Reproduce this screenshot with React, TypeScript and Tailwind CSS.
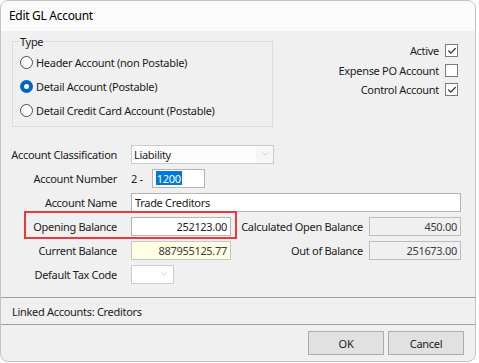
import { Check, ChevronDown } from "lucide-react";

const field = "h-[19px] border px-[3px] flex items-center";

function Radio({ on, label }: { on?: boolean; label: string }) {
  return (
    <div className="flex items-center h-[24px]">
      <span
        className={
          on
            ? "w-[13px] h-[13px] rounded-full bg-[#0067c0] flex items-center justify-center"
            : "w-[13px] h-[13px] rounded-full border border-[#4d4d4d] bg-white"
        }
      >
        {on && <span className="w-[5px] h-[5px] rounded-full bg-white" />}
      </span>
      <span className="ml-[3px]">{label}</span>
    </div>
  );
}

function CheckRow({ label, checked }: { label: string; checked?: boolean }) {
  return (
    <div className="flex items-center justify-end h-[19.5px]">
      <span>{label}</span>
      <span className="ml-[6px] w-[13px] h-[13px] border border-[#7a7a7a] bg-white flex items-center justify-center">
        {checked && <Check className="w-[10px] h-[10px] text-[#333]" strokeWidth={3} />}
      </span>
    </div>
  );
}

function Label({ children }: { children: React.ReactNode }) {
  return <div className="w-[116px] text-right shrink-0">{children}</div>;
}

export default function App() {
  return (
    <div className="w-[479px] h-[363px] bg-white text-[11px] tracking-[-0.3px] text-[#1b1b1b] leading-none whitespace-nowrap font-['Noto_Sans',sans-serif]">
      <div className="w-[476px] h-[362px] rounded-[8px] border border-[#c4c4c4] bg-[#f0f0f0] overflow-hidden flex flex-col">
        {/* Title bar */}
        <div className="h-[30px] bg-[#fbfbfb] flex items-center pl-[8px] text-[12px] text-black shrink-0">
          Edit GL Account
        </div>

        {/* Type group + flags */}
        <div className="flex pl-[11px] pr-[17px]">
          <fieldset className="mt-[5px] w-[261px] h-[91px] border border-[#dcdcdc] pl-[7px] pt-0">
            <legend className="px-[1px] ml-[-1px] mt-[2px]">Type</legend>
            <div className="flex flex-col mt-[3px]">
              <Radio label="Header Account (non Postable)" />
              <Radio on label="Detail Account (Postable)" />
              <Radio label="Detail Credit Card Account (Postable)" />
            </div>
          </fieldset>
          <div className="ml-auto mt-[10px] flex flex-col">
            <CheckRow label="Active" checked />
            <CheckRow label="Expense PO Account" />
            <CheckRow label="Control Account" checked />
          </div>
        </div>

        {/* Form rows */}
        <div className="mt-[15px] flex flex-col">
          <div className="flex items-center h-[24px]">
            <Label>Account Classification</Label>
            <div className="ml-[14px] w-[143px] h-[19px] border border-[#cccccc] bg-[#fdfdfd] flex items-center">
              <span className="pl-[2px] flex-1">Liability</span>
              <span className="w-[17px] h-full bg-[#f6f6f6] flex items-center justify-center">
                <ChevronDown className="w-[10px] h-[10px] text-[#b5b5b5]" strokeWidth={1.5} />
              </span>
            </div>
          </div>

          <div className="flex items-center h-[24px]">
            <Label>Account Number</Label>
            <span className="ml-[14px]">2 -</span>
            <div className={`${field} ml-[9px] w-[53px] bg-white border-[#b4b4b4]`}>
              <span className="bg-[#0078d7] text-white px-[1px] h-[14px] flex items-center">1200</span>
            </div>
          </div>

          <div className="flex items-center h-[24px]">
            <Label>Account Name</Label>
            <div className={`${field} ml-[14px] w-[330px] bg-white border-[#b4b4b4]`}>Trade Creditors</div>
          </div>

          <div className="relative flex items-center h-[24px]">
            <div className="absolute left-[23px] top-[-3px] w-[213px] h-[28px] border-2 border-[#e8393b]" />
            <Label>Opening Balance</Label>
            <div className={`${field} ml-[14px] w-[100px] justify-end bg-white border-[#b4b4b4]`}>252123.00</div>
            <div className="flex-1 text-right pr-[6px]">Calculated Open Balance</div>
            <div className={`${field} mr-[14px] w-[92px] justify-end bg-[#f0f0f0] border-[#bdbdbd] text-[#3c3c3c]`}>450.00</div>
          </div>

          <div className="flex items-center h-[24px]">
            <Label>Current Balance</Label>
            <div className={`${field} ml-[14px] w-[100px] justify-end bg-[#fffee4] border-[#c8c8c8] text-[#3c3c3c]`}>887955125.77</div>
            <div className="flex-1 text-right pr-[6px]">Out of Balance</div>
            <div className={`${field} mr-[14px] w-[92px] justify-end bg-[#f0f0f0] border-[#bdbdbd] text-[#3c3c3c]`}>251673.00</div>
          </div>

          <div className="flex items-center h-[24px]">
            <Label>Default Tax Code</Label>
            <div className="ml-[14px] w-[43px] h-[19px] border border-[#cccccc] bg-white flex items-center justify-end pr-[4px]">
              <ChevronDown className="w-[10px] h-[10px] text-[#b5b5b5]" strokeWidth={1.5} />
            </div>
          </div>
        </div>

        {/* Linked accounts */}
        <div className="mt-[11px] h-[28px] border-t border-b border-[#a0a0a0] flex items-center pl-[11px]">
          Linked Accounts: Creditors
        </div>

        {/* Buttons */}
        <div className="flex justify-end gap-[4px] pt-[6px] pr-[11px]">
          <button className="w-[76px] h-[24px] border border-[#adadad] bg-[#e1e1e1]">OK</button>
          <button className="w-[76px] h-[24px] border border-[#adadad] bg-[#e1e1e1]">Cancel</button>
        </div>
      </div>
    </div>
  );
}
